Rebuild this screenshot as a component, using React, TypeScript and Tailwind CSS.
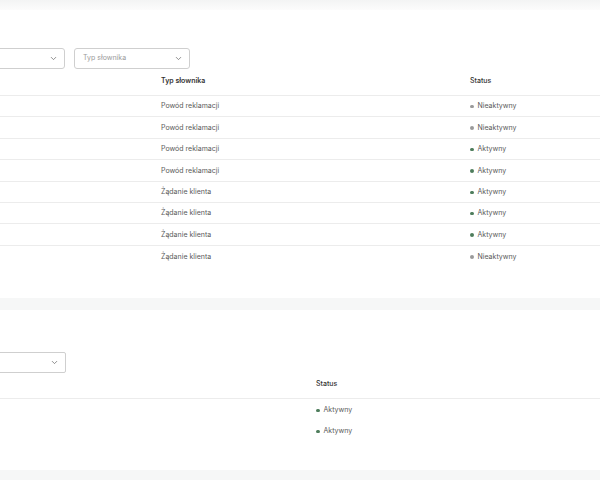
import React from "react";

const rows1: [string, boolean][] = [
  ["Powód reklamacji", false],
  ["Powód reklamacji", false],
  ["Powód reklamacji", true],
  ["Powód reklamacji", true],
  ["Żądanie klienta", true],
  ["Żądanie klienta", true],
  ["Żądanie klienta", true],
  ["Żądanie klienta", false],
];

function Chevron() {
  return (
    <svg width="9" height="9" viewBox="0 0 24 24" fill="none" stroke="#6b6b6b" strokeWidth="2" strokeLinecap="round" strokeLinejoin="round">
      <path d="m6 9 6 6 6-6" />
    </svg>
  );
}

function Status({ active }: { active: boolean }) {
  return (
    <div className="flex items-center gap-[4px]">
      <span className={active ? "w-[3.5px] h-[3.5px] rounded-full bg-[#4e7d5c]" : "w-[3.5px] h-[3.5px] rounded-full bg-[#9a9a9a]"} />
      <span className="text-[#5a5a5a]">{active ? "Aktywny" : "Nieaktywny"}</span>
    </div>
  );
}

export default function App() {
  return (
    <div
      className="w-[600px] h-[480px] overflow-hidden bg-[#f6f7f7] text-[7px] text-[#5a5a5a]"
      style={{ fontFamily: "Inter, 'Noto Sans', sans-serif" }}
    >
      <div className="h-[10px] bg-gradient-to-b from-[#f3f4f4] to-[#fcfcfc]" />
      <div className="h-[288px] bg-white flex flex-col">
        <div className="h-[38px]" />
        <div className="flex gap-[9px] ml-[-55px] h-[21px]">
          <div className="w-[120px] border border-[#cfcfcf] rounded-[3px] flex items-center justify-end pr-[6px]">
            <Chevron />
          </div>
          <div className="w-[116px] border border-[#cfcfcf] rounded-[3px] flex items-center justify-between pl-[8px] pr-[6px]">
            <span className="text-[#9a9a9a]">Typ słownika</span>
            <Chevron />
          </div>
        </div>
        <div className="grid grid-cols-[161px_309px_1fr] h-[27px] items-center border-b border-[#ececec] pb-[2px]">
          <div />
          <div className="font-semibold text-[#333]">Typ słownika</div>
          <div className="font-medium text-[#333]">Status</div>
        </div>
        {rows1.map(([t, a], i) => (
          <div
            key={i}
            className={
              i < rows1.length - 1
                ? "grid grid-cols-[161px_309px_1fr] h-[21.4px] items-center border-b border-[#ececec] pt-[1px]"
                : "grid grid-cols-[161px_309px_1fr] h-[21.4px] items-center pt-[1px]"
            }
          >
            <div />
            <div>{t}</div>
            <Status active={a} />
          </div>
        ))}
      </div>
      <div className="h-[12px]" />
      <div className="h-[160px] bg-white flex flex-col">
        <div className="h-[42px]" />
        <div className="flex ml-[-55px] h-[21px]">
          <div className="w-[121px] border border-[#cfcfcf] rounded-[2px] flex items-center justify-end pr-[6px]">
            <Chevron />
          </div>
        </div>
        <div className="grid grid-cols-[316px_1fr] h-[26px] items-center border-b border-[#ececec] pb-[2px]">
          <div />
          <div className="font-medium text-[#333]">Status</div>
        </div>
        {[true, true].map((a, i) => (
          <div key={i} className="grid grid-cols-[316px_1fr] h-[21px] items-center pt-[2px]">
            <div />
            <Status active={a} />
          </div>
        ))}
      </div>
    </div>
  );
}
